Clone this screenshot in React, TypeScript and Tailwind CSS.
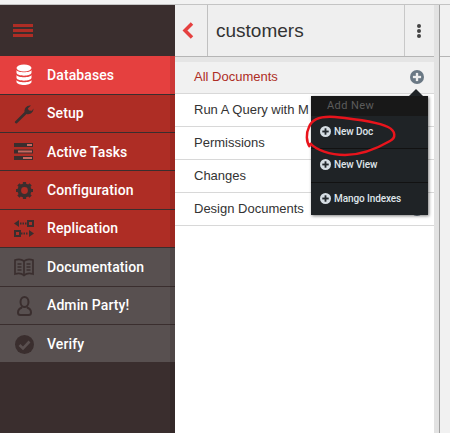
import React from "react";

const Plus = ({ s = 11, bg = "#d5dde3", fg = "#22282c" }: { s?: number; bg?: string; fg?: string }) => (
  <svg width={s} height={s} viewBox="0 0 12 12" className="shrink-0">
    <circle cx="6" cy="6" r="6" fill={bg} />
    <rect x="2.5" y="5" width="7" height="2" fill={fg} />
    <rect x="5" y="2.5" width="2" height="7" fill={fg} />
  </svg>
);

const C = "#3a2e2e";

const Db = () => (
  <svg width="16" height="22" viewBox="0 0 16 22">
    <ellipse cx="8" cy="4" rx="7.5" ry="3.5" fill="#fff" />
    <path d="M.5 6c1 3 14 3 15 0v3c-1 3.500-14 3.500-15 0zM.5 11c1 3 14 3 15 0v3c-1 3.500-14 3.500-15 0zM.5 16c1 3 14 3 15 0v2c-1 4-14 4-15 0z" fill="#fff" />
  </svg>
);
const Wrench = () => (
  <svg width="20" height="20" viewBox="0 0 20 20">
    <path d="M1 17.500 10.500 8C10 4.500 13 .8 17 1.600L13.800 4.500 15 6.600 18 6.800 19.400 4.600C19.800 8.600 15.800 11 12.500 10L3 19.300C2 20 .2 18.600 1 17.500Z" fill={C} />
  </svg>
);
const Tasks = () => (
  <svg width="20" height="18" viewBox="0 0 20 18">
    <rect x="0" y="0" width="19" height="4" fill={C} />
    <rect x="13" y="1" width="5" height="2" fill="#c9685f" />
    <rect x="0" y="6.500" width="19" height="4" fill={C} />
    <rect x="4" y="7.500" width="14" height="2" fill="#c9685f" />
    <rect x="0" y="13" width="19" height="4" fill={C} />
    <rect x="9" y="14" width="9" height="2" fill="#c9685f" />
  </svg>
);
const Gear = () => (
  <svg width="17" height="17" viewBox="0 0 17 17">
    <circle cx="8.500" cy="8.500" r="5.200" fill="none" stroke={C} strokeWidth="3.600" />
    <g stroke={C} strokeWidth="3.200">
      <path d="M8.500 0v3M8.500 14v3M0 8.500h3M14 8.500h3M2.400 2.400l2.200 2.200M12.400 12.400l2.200 2.200M14.600 2.400l-2.200 2.200M4.600 12.400l-2.200 2.200" />
    </g>
  </svg>
);
const Repl = () => (
  <svg width="20" height="17" viewBox="0 0 20 17">
    <path d="M0 3.500 5 0v7z" fill={C} />
    <path d="M6 3.500h7" stroke={C} strokeWidth="2" strokeDasharray="1.500 1" />
    <rect x="14" y="1" width="5" height="5" fill="none" stroke={C} strokeWidth="2" />
    <rect x="1" y="11" width="5" height="5" fill="none" stroke={C} strokeWidth="2" />
    <path d="M7 13.500h7" stroke={C} strokeWidth="2" strokeDasharray="1.500 1" />
    <path d="M20 13.500 15 10v7z" fill={C} />
  </svg>
);
const Book = () => (
  <svg width="20" height="19" viewBox="0 0 20 19" fill="none" stroke={C} strokeWidth="1.700">
    <path d="M10 3C8 1.500 4 1 1 2v14c3-1 7-.5 9 1.500 2-2 6-2.500 9-1.500V2c-3-1-7-.5-9 1z" />
    <path d="M10 3v14M3.500 6h4M3.500 9h4M3.500 12h4M12.500 6h4M12.500 9h4M12.500 12h4" />
  </svg>
);
const User = () => (
  <svg width="15" height="20" viewBox="0 0 15 20" fill="none" stroke={C} strokeWidth="2">
    <ellipse cx="7.500" cy="6" rx="4" ry="5" />
    <path d="M5 11.500C2 12.500 1 14.500 1 16.500c0 1.500 1 2.500 2.500 2.500h8c1.500 0 2.500-1 2.500-2.500 0-2-1-4-4-5" />
  </svg>
);
const Check = () => (
  <svg width="19" height="19" viewBox="0 0 19 19">
    <circle cx="9.500" cy="9.500" r="9.500" fill={C} />
    <path d="M4.500 10l3.500 3.500 6.500-7" fill="none" stroke="#5a5050" strokeWidth="2.600" />
  </svg>
);

const nav = [
  { label: "Databases", icon: <Db />, cls: "h-[39px] bg-[#e5403f] border-b" },
  { label: "Setup", icon: <Wrench />, cls: "h-[38px] bg-[#ae2d25] border-b" },
  { label: "Active Tasks", icon: <Tasks />, cls: "h-[38px] bg-[#ae2d25] border-b pt-[1px]" },
  { label: "Configuration", icon: <Gear />, cls: "h-[39px] bg-[#ae2d25] border-b" },
  { label: "Replication", icon: <Repl />, cls: "h-[38px] bg-[#ae2d25] border-b" },
  { label: "Documentation", icon: <Book />, cls: "h-[39px] bg-[#585050] border-b" },
  { label: "Admin Party!", icon: <User />, cls: "h-[38px] bg-[#585050] border-b" },
  { label: "Verify", icon: <Check />, cls: "h-[37px] bg-[#585050] pt-[1px]" },
];

const rows = ["Run A Query with M", "Permissions", "Changes", "Design Documents"];

export default function App() {
  return (
    <div className="relative w-[450px] h-[433px] overflow-hidden bg-white flex flex-col font-['Roboto',sans-serif]">
      <div className="h-[5px] bg-[#f2f2f2] border-b border-[#c4c4c4] shrink-0" />
      <div className="flex flex-1 min-h-0">
        <aside className="w-[175px] shrink-0 bg-[#3a2e2e] flex flex-col">
          <div className="h-[51px] flex items-center pl-[13px] shrink-0">
            <div className="w-5 flex flex-col gap-[2px]">
              <div className="h-[3px] bg-[#ae2d25]" />
              <div className="h-[3px] bg-[#ae2d25]" />
              <div className="h-[3px] bg-[#ae2d25]" />
            </div>
          </div>
          <div className="relative flex-1 flex flex-col">
            {nav.map((n) => (
              <div key={n.label} className={`${n.cls} flex items-center border-[#3a2e2e]`}>
                <div className="w-[47px] flex justify-center pl-[1px]">{n.icon}</div>
                <span className="text-white text-[14px] font-medium tracking-[0.1px]">{n.label}</span>
              </div>
            ))}
            <div className="absolute right-0 inset-y-0 w-[5px] bg-black/10" />
          </div>
        </aside>
        <main className="flex-1 min-w-0 flex">
          <div className="w-[259px] shrink-0 flex flex-col">
            <header className="h-[52px] shrink-0 bg-[#efefef] flex border-b border-[#b5b5b5]">
              <div className="w-[33px] flex items-center pl-[7px] border-r border-[#c0c0c0]">
                <svg width="12" height="17" viewBox="0 0 12 17">
                  <path d="M10 1.500 3 8.500 10 15.500" fill="none" stroke="#e5403f" strokeWidth="3.500" />
                </svg>
              </div>
              <div className="flex-1 flex items-center pl-2 pt-[1px] text-[19px] text-[#333] font-['Liberation_Sans',sans-serif]">customers</div>
              <div className="w-[30px] flex flex-col items-center justify-center gap-[1px] pr-[1px] border-l border-[#c8c8c8]">
                <i className="w-1 h-1 rounded-full bg-[#444]" />
                <i className="w-1 h-1 rounded-full bg-[#444]" />
                <i className="w-1 h-1 rounded-full bg-[#444]" />
              </div>
            </header>
            <div className="h-[5px] bg-[#e5e5e5] shrink-0" />
            <div className="relative flex-1 text-[13px] font-['Liberation_Sans',sans-serif] text-[#333]">
              <div className="h-[32px] bg-[#f1f1f1] border-b border-[#d8d8d8] flex items-center justify-between pl-[19px] pr-[10px] pb-[2px] text-[#ae2d25]">
                <span>All Documents</span>
                <Plus s={14} bg="#6a7884" fg="#eee" />
              </div>
              {rows.map((r) => (
                <div key={r} className="h-[33px] border-b border-[#d8d8d8] flex items-center justify-between pl-[19px] pr-[10px] pb-[1px] whitespace-nowrap overflow-hidden">
                  <span>{r}</span>
                  {r === "Design Documents" && <Plus s={14} bg="#6a7884" fg="#eee" />}
                </div>
              ))}
              <div className="absolute left-[136px] top-[34px] w-[117px] h-[119px] bg-[#1f2326] shadow-[1px_1px_3px_rgba(0,0,0,0.5)] text-[#dfe5ea] text-[10px] font-medium tracking-[-0.1px] font-['Roboto',sans-serif]">
                <div className="absolute -top-[7px] right-[5px] w-0 h-0 border-x-[7px] border-x-transparent border-b-[7px] border-b-[#1f2326]" />
                <div className="h-5 bg-[#181818] text-[#5c5c5c] pl-4 flex items-center text-[11px] font-normal tracking-[0.4px]">Add New</div>
                <div className="h-[33px] flex items-center gap-[3px] pl-[9px] pb-[2px] border-b border-[#121212]"><Plus /> New Doc</div>
                <div className="h-[34px] flex items-center gap-[3px] pl-[9px] pb-[2px] border-b border-[#121212]"><Plus /> New View</div>
                <div className="h-[32px] flex items-center gap-[3px] pl-[9px] pb-[2px]"><Plus /> Mango Indexes</div>
              </div>
            </div>
          </div>
          <div className="w-[5px] shrink-0 bg-[#e2e2e2]" />
          <div className="flex-1 flex flex-col bg-[#f1f1f1] border-l border-[#a0a0a0]">
            <div className="h-[52px] shrink-0 border-b border-[#b5b5b5]" />
          </div>
        </main>
      </div>
      <svg className="absolute left-0 top-0 pointer-events-none" width="450" height="433" viewBox="0 0 450 433">
        <path d="M310 147C306 142 306 133 309 127 312 119 322 116 335 117 355 119 378 122 388 127 396 131 396 138 390 141 378 148 362 155 345 155 330 155 316 150 310 143" fill="none" stroke="#e8141c" strokeWidth="2.500" />
      </svg>
    </div>
  );
}
